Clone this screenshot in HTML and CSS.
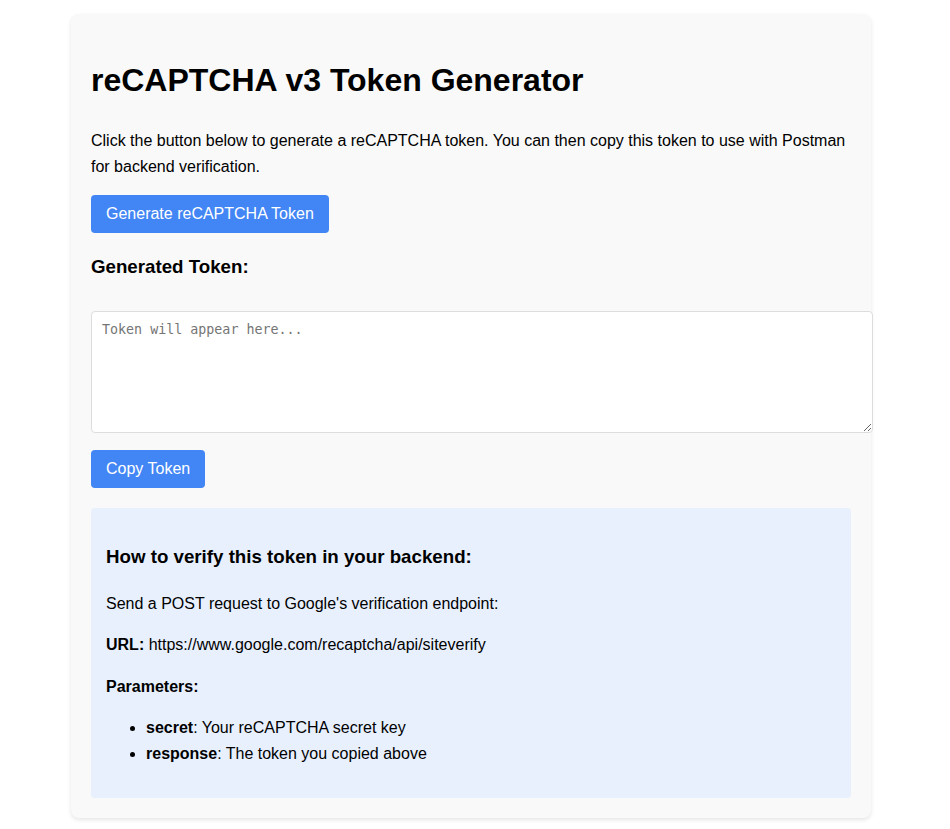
FILE: index.html
```html
<!DOCTYPE html>
<html lang="en">
<head>
<meta charset="utf-8">
<title>reCAPTCHA v3 Token Generator</title>
<link rel="stylesheet" href="styles.css">
</head>
<body>
<div class="container">
  <h1>reCAPTCHA v3 Token Generator</h1>
  <p>Click the button below to generate a reCAPTCHA token. You can then copy this token to use with Postman for backend verification.</p>
  <button class="btn">Generate reCAPTCHA Token</button>
  <h3>Generated Token:</h3>
  <textarea class="token" placeholder="Token will appear here..." readonly></textarea>
  <button class="btn">Copy Token</button>
  <div class="instructions">
    <h3>How to verify this token in your backend:</h3>
    <p>Send a POST request to Google's verification endpoint:</p>
    <p><strong>URL:</strong> https://www.google.com/recaptcha/api/siteverify</p>
    <p><strong>Parameters:</strong></p>
    <ul>
      <li><strong>secret</strong>: Your reCAPTCHA secret key</li>
      <li><strong>response</strong>: The token you copied above</li>
    </ul>
  </div>
</div>
</body>
</html>
```
FILE: styles.css
```css
html, body {
  background: #fff;
}
body {
  margin: 0;
  padding: 14px 0 11px 71px;
  font-family: "Liberation Sans", Arial, sans-serif;
  font-size: 16px;
  line-height: 1.6;
  color: #000;
}
.container {
  width: 760px;
  padding: 20px;
  background: #f9f9f9;
  border-radius: 8px;
  box-shadow: 0 2px 4px rgba(0, 0, 0, 0.1);
}
h1 {
  font-size: 32px;
  margin: 21.44px 0;
}
h3 {
  font-size: 18.72px;
  margin: 18.72px 0;
}
p {
  margin: 16px 0;
}
.btn {
  background: #4285f4;
  color: #fff;
  border: none;
  border-radius: 4px;
  padding: 10px 15px;
  font-family: "Liberation Sans", Arial, sans-serif;
  font-size: 16px;
  line-height: normal;
  cursor: pointer;
}
.token {
  width: 100%;
  height: 100px;
  margin: 10px 0;
  padding: 10px;
  border: 1px solid #ddd;
  border-radius: 4px;
  font-family: "DejaVu Sans Mono", monospace;
  font-size: 13.333px;
  background: #fff;
  vertical-align: baseline;
}
.token::placeholder {
  color: #757575;
}
.instructions {
  margin-top: 20px;
  padding: 15px;
  background: #e8f0fe;
  border-radius: 4px;
}
ul {
  margin: 16px 0;
  padding-left: 40px;
}
```
